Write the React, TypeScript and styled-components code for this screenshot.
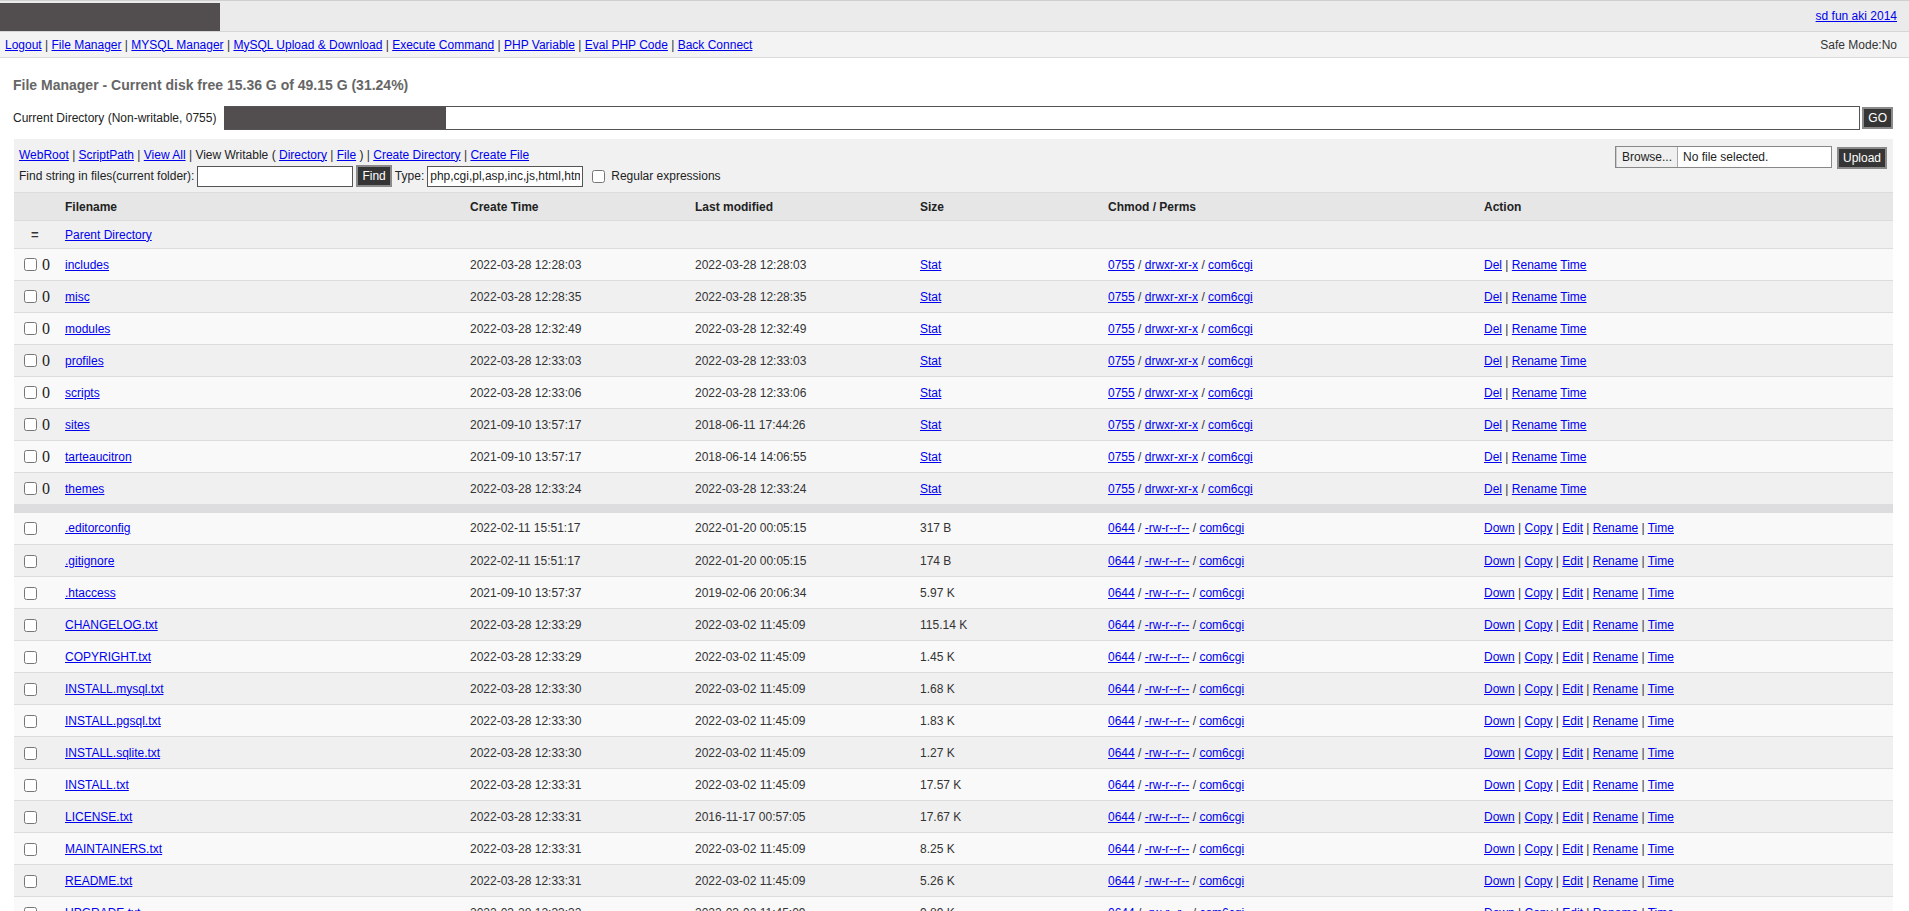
import styled, { createGlobalStyle } from "styled-components";

const GlobalStyle = createGlobalStyle`
  html, body {
    margin: 0;
    padding: 0;
    background: #fff;
    font-family: "Liberation Sans", Arial, sans-serif;
    font-size: 12px;
    color: #333;
  }
  a {
    color: #0000ee;
    text-decoration: underline;
  }
`

const TopBar = styled.div`
  display: flex;
  justify-content: space-between;
  align-items: center;
  height: 30px;
  background: #ebebeb;
  border-top: 1px solid #cfcfcf;
  border-bottom: 1px solid #d6d6d6;
  padding-right: 12px;
`

const Redact = styled.div<{ $w: number; $h: number }>`
  width: ${p => p.$w}px;
  height: ${p => p.$h}px;
  background: #524d4f;
  flex-shrink: 0;
`

const NavBar = styled.div`
  display: flex;
  justify-content: space-between;
  align-items: center;
  height: 25px;
  padding: 0 12px 0 5px;
  background: #f3f3f3;
  border-bottom: 1px solid #dadada;
  color: #333;
`

const Sep = styled.span`
  color: #333;
`

const Main = styled.div`
  padding: 0 16px 0 14px;
`

const Title = styled.h2`
  margin: 19px 0 0 -1px;
  font-size: 14px;
  font-weight: bold;
  color: #666;
`

const DirForm = styled.div`
  display: flex;
  align-items: center;
  margin-top: 13px;
  height: 23px;
`

const DirLabel = styled.span`
  width: 211px;
  margin-left: -1px;
  font-size: 12px;
  color: #222;
`

const PathField = styled.div`
  flex: 1;
  height: 22px;
  border: 1px solid #555;
  border-left: none;
  background: #fff;
  display: flex;
`

const DarkButton = styled.button<{ $pad?: number; $ml?: number; $mt?: number }>`
  background: #353535;
  color: #fff;
  border: 2px solid #8a8a8a;
  font-family: inherit;
  font-size: 12px;
  padding: 2px ${p => p.$pad ?? 4}px;
  margin-left: ${p => p.$ml ?? 2}px;
  margin-top: ${p => p.$mt ?? 0}px;
  height: 22px;
  line-height: 14px;
`

const Panel = styled.div`
  margin-top: 10px;
  background: #f1f1f2;
`

const Toolbar = styled.div`
  display: flex;
  justify-content: space-between;
  align-items: flex-start;
  padding: 6px 6px 6px 5px;
  height: 41px;
`

const ToolRow = styled.div`
  display: flex;
  align-items: center;
  height: 19px;
  white-space: pre;
  color: #222;
`

const FindRow = styled(ToolRow)`
  margin-top: 1px;
  height: 22px;
`

const TextBox = styled.input`
  width: 156px;
  height: 21px;
  box-sizing: border-box;
  border: 1px solid #555;
  margin: 0 3px 0 3px;
  font-family: inherit;
  font-size: 12px;
  padding: 1px 2px;
  color: #222;
`

const Check = styled.input`
  width: 13px;
  height: 13px;
  margin: 0 6px 0 6px;
`

const UploadBox = styled.div`
  display: flex;
  align-items: flex-start;
  margin-top: 1px;
`

const FilePick = styled.div`
  display: flex;
  align-items: center;
  width: 217px;
  height: 22px;
  box-sizing: border-box;
  border: 1px solid #888;
  background: #fff;
  color: #222;
`

const BrowseBtn = styled.span`
  height: 100%;
  box-sizing: border-box;
  padding: 3px 5px;
  background: #f0f0f0;
  border-right: 1px solid #aaa;
  border-left: 1px solid #ccc;
  margin-right: 5px;
`

const Table = styled.table`
  width: 100%;
  border-collapse: collapse;
  table-layout: fixed;
`

const Th = styled.th`
  text-align: left;
  font-weight: bold;
  color: #222;
  background: #e6e6e7;
  height: 27px;
  padding: 0 6px;
  border-top: 1px solid #dcdcdc;
  border-bottom: 1px solid #dcdcdc;
`

const Row = styled.tr<{ $shade?: boolean; $h?: number }>`
  background: ${p => (p.$shade ? "#f0f0f1" : "#f9f9fa")};
  height: ${p => p.$h ?? 32}px;
  td {
    border-bottom: 1px solid #dcdcdc;
    padding: 0 6px;
    white-space: nowrap;
    overflow: hidden;
  }
`

const Gap = styled.tr`
  height: 8px;
  background: #dddddf;
`

const Zero = styled.span`
  font-family: "Liberation Serif", "Times New Roman", serif;
  font-size: 16px;
  color: #222;
  vertical-align: middle;
`

const RowCheck = styled.input`
  width: 13px;
  height: 13px;
  margin: 0 5px 0 4px;
  vertical-align: middle;
`

const Eq = styled.span`
  display: inline-block;
  padding-left: 11px;
  font-size: 13px;
  font-weight: bold;
`

const cols = [45, 405, 225, 225, 188, 376, 415];

const dirs: [string, string, string][] = [
  ["includes", "2022-03-28 12:28:03", "2022-03-28 12:28:03"],
  ["misc", "2022-03-28 12:28:35", "2022-03-28 12:28:35"],
  ["modules", "2022-03-28 12:32:49", "2022-03-28 12:32:49"],
  ["profiles", "2022-03-28 12:33:03", "2022-03-28 12:33:03"],
  ["scripts", "2022-03-28 12:33:06", "2022-03-28 12:33:06"],
  ["sites", "2021-09-10 13:57:17", "2018-06-11 17:44:26"],
  ["tarteaucitron", "2021-09-10 13:57:17", "2018-06-14 14:06:55"],
  ["themes", "2022-03-28 12:33:24", "2022-03-28 12:33:24"],
];

const files: [string, string, string, string][] = [
  [".editorconfig", "2022-02-11 15:51:17", "2022-01-20 00:05:15", "317 B"],
  [".gitignore", "2022-02-11 15:51:17", "2022-01-20 00:05:15", "174 B"],
  [".htaccess", "2021-09-10 13:57:37", "2019-02-06 20:06:34", "5.97 K"],
  ["CHANGELOG.txt", "2022-03-28 12:33:29", "2022-03-02 11:45:09", "115.14 K"],
  ["COPYRIGHT.txt", "2022-03-28 12:33:29", "2022-03-02 11:45:09", "1.45 K"],
  ["INSTALL.mysql.txt", "2022-03-28 12:33:30", "2022-03-02 11:45:09", "1.68 K"],
  ["INSTALL.pgsql.txt", "2022-03-28 12:33:30", "2022-03-02 11:45:09", "1.83 K"],
  ["INSTALL.sqlite.txt", "2022-03-28 12:33:30", "2022-03-02 11:45:09", "1.27 K"],
  ["INSTALL.txt", "2022-03-28 12:33:31", "2022-03-02 11:45:09", "17.57 K"],
  ["LICENSE.txt", "2022-03-28 12:33:31", "2016-11-17 00:57:05", "17.67 K"],
  ["MAINTAINERS.txt", "2022-03-28 12:33:31", "2022-03-02 11:45:09", "8.25 K"],
  ["README.txt", "2022-03-28 12:33:31", "2022-03-02 11:45:09", "5.26 K"],
  ["UPGRADE.txt", "2022-03-28 12:33:32", "2022-03-02 11:45:09", "9.89 K"],
];

const navLinks = [
  "Logout",
  "File Manager",
  "MYSQL Manager",
  "MySQL Upload & Download",
  "Execute Command",
  "PHP Variable",
  "Eval PHP Code",
  "Back Connect",
];

const Links = ({ items }: { items: string[] }) => (
  <>
    {items.map((t, i) => (
      <span key={t}>
        {i > 0 && <Sep> | </Sep>}
        <a href="#">{t}</a>
      </span>
    ))}
  </>
);

function App() {
  return (
    <>
      <GlobalStyle />
      <TopBar>
        <Redact $w={220} $h={28} style={{ alignSelf: "flex-end" }} />
        <a href="#">sd fun aki 2014</a>
      </TopBar>
      <NavBar>
        <div>
          <Links items={navLinks} />
        </div>
        <span>Safe Mode:No</span>
      </NavBar>
      <Main>
        <Title>File Manager - Current disk free 15.36 G of 49.15 G (31.24%)</Title>
        <DirForm>
          <DirLabel>Current Directory (Non-writable, 0755)</DirLabel>
          <PathField>
            <Redact $w={222} $h={22} />
          </PathField>
          <DarkButton>GO</DarkButton>
        </DirForm>
        <Panel>
          <Toolbar>
            <div>
              <ToolRow>
                <a href="#">WebRoot</a>
                <Sep> | </Sep>
                <a href="#">ScriptPath</a>
                <Sep> | </Sep>
                <a href="#">View All</a>
                <Sep> | </Sep>
                {"View Writable ( "}
                <a href="#">Directory</a>
                <Sep> | </Sep>
                <a href="#">File</a>
                {" ) "}
                <Sep>| </Sep>
                <a href="#">Create Directory</a>
                <Sep> | </Sep>
                <a href="#">Create File</a>
              </ToolRow>
              <FindRow>
                Find string in files(current folder):
                <TextBox type="text" defaultValue="" />
                <DarkButton $pad={4} $ml={0}>Find</DarkButton>
                {" Type:"}
                <TextBox type="text" defaultValue="php,cgi,pl,asp,inc,js,html,htm" />
                <Check type="checkbox" />
                Regular expressions
              </FindRow>
            </div>
            <UploadBox>
              <FilePick>
                <BrowseBtn>Browse...</BrowseBtn>
                No file selected.
              </FilePick>
              <DarkButton $pad={4} $ml={5} $mt={1}>Upload</DarkButton>
            </UploadBox>
          </Toolbar>
          <Table>
            <colgroup>
              {cols.map((w, i) => (
                <col key={i} style={{ width: w }} />
              ))}
            </colgroup>
            <thead>
              <tr>
                <Th />
                <Th>Filename</Th>
                <Th>Create Time</Th>
                <Th>Last modified</Th>
                <Th>Size</Th>
                <Th>Chmod / Perms</Th>
                <Th>Action</Th>
              </tr>
            </thead>
            <tbody>
              <Row $shade $h={28}>
                <td>
                  <Eq>=</Eq>
                </td>
                <td colSpan={6}>
                  <a href="#">Parent Directory</a>
                </td>
              </Row>
              {dirs.map(([name, c, m], i) => (
                <Row key={name} $shade={i % 2 === 1}>
                  <td>
                    <RowCheck type="checkbox" />
                    <Zero>0</Zero>
                  </td>
                  <td>
                    <a href="#">{name}</a>
                  </td>
                  <td>{c}</td>
                  <td>{m}</td>
                  <td>
                    <a href="#">Stat</a>
                  </td>
                  <td>
                    <a href="#">0755</a> / <a href="#">drwxr-xr-x</a> / <a href="#">com6cgi</a>
                  </td>
                  <td>
                    <a href="#">Del</a>
                    <Sep> | </Sep>
                    <a href="#">Rename</a> <a href="#">Time</a>
                  </td>
                </Row>
              ))}
              <Gap>
                <td colSpan={7} />
              </Gap>
              {files.map(([name, c, m, size], i) => (
                <Row key={name} $shade={i % 2 === 1}>
                  <td>
                    <RowCheck type="checkbox" />
                  </td>
                  <td>
                    <a href="#">{name}</a>
                  </td>
                  <td>{c}</td>
                  <td>{m}</td>
                  <td>{size}</td>
                  <td>
                    <a href="#">0644</a> / <a href="#">-rw-r--r--</a> / <a href="#">com6cgi</a>
                  </td>
                  <td>
                    <Links items={["Down", "Copy", "Edit", "Rename", "Time"]} />
                  </td>
                </Row>
              ))}
            </tbody>
          </Table>
        </Panel>
      </Main>
    </>
  );
}

export default App;
